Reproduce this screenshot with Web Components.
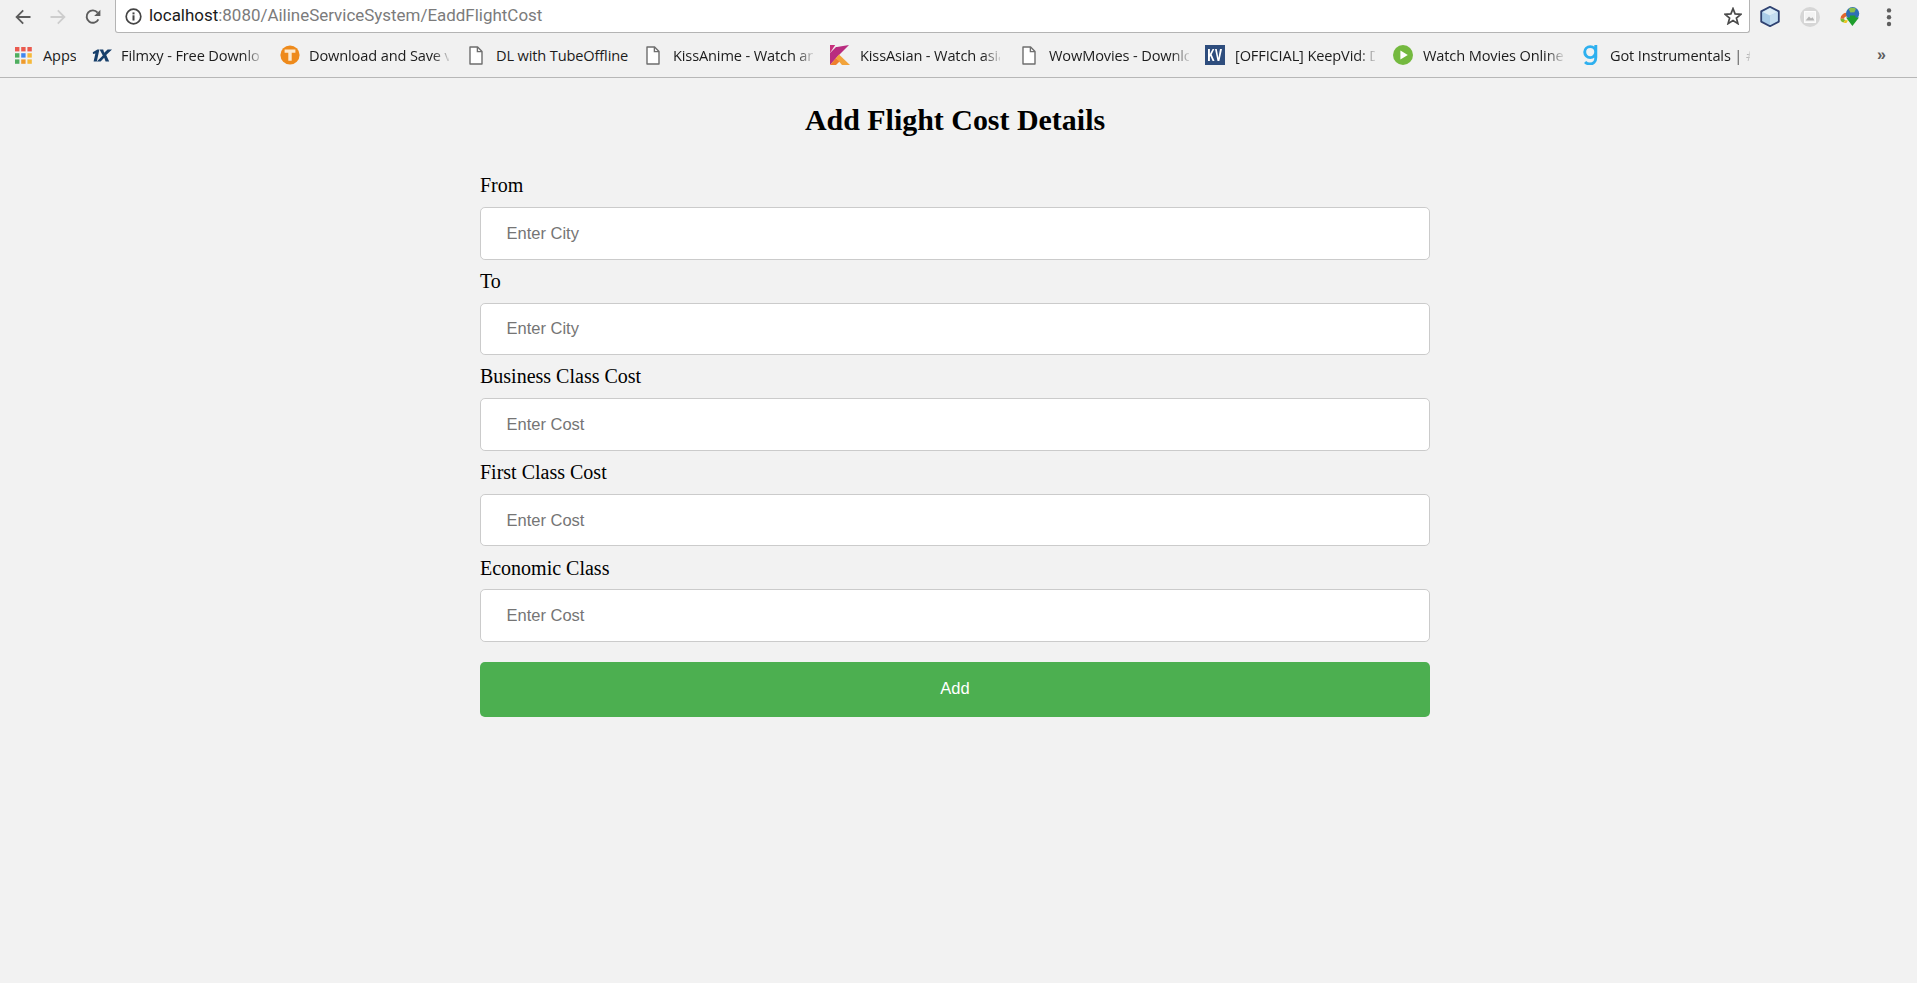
<!DOCTYPE html>
<html lang="en">
<head>
<meta charset="utf-8">
<title>Add Flight Cost Details</title>
<style>
html,body{margin:0;padding:0;height:100%;background:#f2f2f2;overflow:hidden}
body{display:flex;flex-direction:column;height:983px}
</style>
</head>
<body>
<browser-toolbar url-host="localhost" url-path=":8080/AilineServiceSystem/EaddFlightCost"></browser-toolbar>
<bookmarks-bar>
  <bookmark-item icon="apps" w="77" nofade>Apps</bookmark-item>
  <bookmark-item icon="onex" w="188">Filmxy - Free Downlo</bookmark-item>
  <bookmark-item icon="tube" w="189">Download and Save v</bookmark-item>
  <bookmark-item icon="doc" w="177" nofade>DL with TubeOffline</bookmark-item>
  <bookmark-item icon="doc" w="184">KissAnime - Watch an</bookmark-item>
  <bookmark-item icon="kiss" w="192">KissAsian - Watch asia</bookmark-item>
  <bookmark-item icon="doc" w="183">WowMovies - Downlo</bookmark-item>
  <bookmark-item icon="kv" w="188">[OFFICIAL] KeepVid: D</bookmark-item>
  <bookmark-item icon="play" w="190">Watch Movies Online</bookmark-item>
  <bookmark-item icon="got" w="180">Got Instrumentals | #</bookmark-item>
</bookmarks-bar>
<flight-page>
  <form-field label="From" placeholder="Enter City"></form-field>
  <form-field label="To" placeholder="Enter City"></form-field>
  <form-field label="Business Class Cost" placeholder="Enter Cost"></form-field>
  <form-field label="First Class Cost" placeholder="Enter Cost"></form-field>
  <form-field label="Economic Class" placeholder="Enter Cost"></form-field>
  <submit-button>Add</submit-button>
</flight-page>
<script>
const ICONS={
 apps:`<svg width="17" height="17" viewBox="0 0 17 17"><g>
  <rect x="0" y="0" width="4.4" height="4.4" fill="#ea5a4e"/><rect x="6.2" y="0" width="4.4" height="4.4" fill="#ea5a4e"/><rect x="12.4" y="0" width="4.4" height="4.4" fill="#ea5a4e"/>
  <rect x="0" y="6.2" width="4.4" height="4.4" fill="#4fae5f"/><rect x="6.2" y="6.2" width="4.4" height="4.4" fill="#3f86ee"/><rect x="12.4" y="6.2" width="4.4" height="4.4" fill="#f6b93a"/>
  <rect x="0" y="12.4" width="4.4" height="4.4" fill="#4fae5f"/><rect x="6.2" y="12.4" width="4.4" height="4.4" fill="#ee9a2c"/><rect x="12.4" y="12.4" width="4.4" height="4.4" fill="#f6b93a"/></g></svg>`,
 onex:`<svg width="20" height="13" viewBox="0 0 20 13"><path d="M.8 3.2 5.4.6h2L4.8 12.4H1.6L3.4 4.4 1 5z" fill="#173f6b"/><path d="M7.6.6h3.6l1 3.2L15.6.6H20l-5.8 5.4 3 6.4h-3.6l-1.4-3.6-3.6 3.6H4.8l6-5.8z" fill="#173f6b"/></svg>`,
 tube:`<svg width="20" height="20" viewBox="0 0 20 20"><circle cx="10" cy="10" r="9.6" fill="#ee8a1b"/><path d="M4.6 4.6h10.8v3.2h-3.7v8h-3.4v-8H4.6z" fill="#fbe9cf"/></svg>`,
 doc:`<svg width="14" height="19" viewBox="0 0 14 19"><path d="M1 1h7.6L13 5.4V18H1z" fill="#fff" stroke="#6e6e6e" stroke-width="1.4" stroke-linejoin="round"/><path d="M8.4 1v4.6H13" fill="none" stroke="#6e6e6e" stroke-width="1.4"/></svg>`,
 kiss:`<svg width="20" height="20" viewBox="0 0 20 20"><path d="M0 0h5.2L.0 8z" fill="#c8307c"/><path d="M0 20V8L6 2h1l12-2L8 11z" fill="#b92c7f"/><path d="M6 13l3-3.5L20 20h-8z" fill="#f2a33a"/><path d="M0 20l6-7 3.5 3.5L6 20z" fill="#ee7f2d"/></svg>`,
 kv:`<svg width="20" height="20" viewBox="0 0 20 20"><rect width="20" height="20" fill="#2e4d7d"/><path d="M3 4h1.9v5L7.6 4h1.7L6.7 9.6 9.5 16H7.6L5.4 10.9 4.9 11.8V16H3zM10 4h1.8l1.6 9 1.6-9H17l-2.6 12h-1.9z" fill="#fff"/></svg>`,
 play:`<svg width="20" height="20" viewBox="0 0 20 20"><circle cx="10" cy="10" r="10" fill="#74b93f"/><path d="M7.4 5.6 14.8 10l-7.4 4.4z" fill="#fff"/></svg>`,
 got:`<svg width="15" height="20" viewBox="0 0 15 20"><path d="M7.2 1.6a5.5 5.5 0 1 0 0 11 5.5 5.5 0 0 0 0-11zM12.8 0v12.4c0 4.3-2.6 6.6-5.8 6.6-2 0-3.7-.7-4.9-2" fill="none" stroke="#2eb0ef" stroke-width="2.9"/></svg>`
};
const GAPS={apps:11,onex:9,tube:9,doc:13,kiss:10,kv:10,play:10,got:12};

class BrowserToolbar extends HTMLElement{
 constructor(){super();
  const r=this.attachShadow({mode:'open'});
  r.innerHTML=`<style>
  :host{display:flex;flex:0 0 33px;height:33px;background:#f1f1f1;align-items:stretch;box-sizing:border-box}
  .nav{flex:0 0 115px;display:flex;align-items:center;padding-left:15px;gap:19px;box-sizing:border-box}
  .box{flex:0 0 1635px;background:#fff;border:1px solid #b4b4b4;border-top:0;border-radius:0 0 3px 3px;box-sizing:border-box;display:flex;align-items:center;padding:0 7px 0 9px;height:33px}
  .url{font:16.95px/20px "Roboto","Liberation Sans",sans-serif;color:#7b7b7b;margin:0 0 2px 7px;flex:1;white-space:nowrap}
  .url b{font-weight:400;color:#1a1a1a}
  .ext{flex:1;display:flex;align-items:center;padding-left:10px;gap:20px}
  svg{display:block;flex:none}
  </style>
  <div class="nav">
   <svg width="16" height="16" viewBox="0 0 16 16"><path d="M15.5 8H2M8.2 1.4 1.6 8l6.6 6.6" fill="none" stroke="#5c5c5c" stroke-width="1.8"/></svg>
   <svg width="16" height="16" viewBox="0 0 16 16"><path d="M.5 8H14M7.8 1.4 14.4 8l-6.6 6.6" fill="none" stroke="#cdcdcd" stroke-width="1.8"/></svg>
   <svg width="16" height="16" viewBox="0 0 16 16"><path d="M13.4 10.4A6.2 6.2 0 1 1 12.6 3.6" fill="none" stroke="#5c5c5c" stroke-width="1.9"/><path d="M15.4.8v6.2H9.2z" fill="#5c5c5c"/></svg>
  </div>
  <div class="box">
   <svg width="17" height="17" viewBox="0 0 17 17"><circle cx="8.5" cy="8.5" r="7.3" fill="none" stroke="#444" stroke-width="1.7"/><rect x="7.5" y="7.3" width="2" height="5.2" fill="#444"/><rect x="7.5" y="4.4" width="2" height="2" fill="#444"/></svg>
   <span class="url"><b>${this.getAttribute('url-host')}</b>${this.getAttribute('url-path')}</span>
   <svg width="18" height="18" viewBox="0 0 18 18"><path d="M9 1.6 11.1 6.9 16.9 7.3 12.4 11 13.9 16.6 9 13.6 4.1 16.6 5.6 11 1.1 7.3 6.9 6.9z" fill="none" stroke="#4a4a4a" stroke-width="1.7"/></svg>
  </div>
  <div class="ext">
   <svg width="20" height="21" viewBox="0 0 20 21"><path d="M10 .8 18.8 5.4v10.2L10 20.2 1.2 15.6V5.4z" fill="#a9cce8" stroke="#2f4170" stroke-width="1.8" stroke-linejoin="round"/><path d="M2.6 6 10 9.6 17.6 6 10 2.2z" fill="#dcecf6"/><path d="M10 9.6V19l7.6-4V6z" fill="#c5def0"/></svg>
   <svg width="20" height="20" viewBox="0 0 20 20"><circle cx="10" cy="10" r="10" fill="#d6d6d6"/><rect x="4.6" y="4.6" width="10.8" height="10.8" fill="#f3f3f3" stroke="#fff"/><path d="M5.6 13.6 9 9.6l2 2 1.6-1.4 1.8 3.4z" fill="#b5b5b5"/></svg>
   <svg width="21" height="21" viewBox="0 0 21 21"><path d="M.4 12.8a6 6 0 0 1 8-5.6l-1 3.4c-2-.6-3.4.6-3.2 2.2z" fill="#e0662d"/><path d="M.4 12.8c0 2 1.2 3.4 3 3.8l2-2.6c-.8 0-1.6-.5-1.8-1.2z" fill="#7cb82f"/><path d="M3.4 16.6c1 .5 2.2.5 3.2.1l1.4-2.2-2.6-.5z" fill="#f0c419"/><circle cx="12.6" cy="7.6" r="6.6" fill="#2f6fb5"/><path d="M8.6 3c2-1.6 5.4-1.8 7.4-.2l-1.6 3.4-4 .2z" fill="#8cc04a"/><path d="M6 11.6h4V9.4h5.4v2.2h3.6L12.4 20z" fill="#1f9e2d"/></svg>
   <svg style="margin-left:5px" width="6" height="20" viewBox="0 0 6 20"><circle cx="3" cy="3.4" r="2.2" fill="#5e5e5e"/><circle cx="3" cy="10.2" r="2.2" fill="#5e5e5e"/><circle cx="3" cy="17" r="2.2" fill="#5e5e5e"/></svg>
  </div>`;
 }
}
customElements.define('browser-toolbar',BrowserToolbar);

class BookmarksBar extends HTMLElement{
 constructor(){super();
  this.attachShadow({mode:'open'}).innerHTML=`<style>
  :host{display:flex;flex:0 0 45px;height:45px;background:#f1f1f1;border-bottom:1px solid #b7b7b7;box-sizing:border-box;padding-left:15px;align-items:center}
  .more{margin-left:auto;margin-right:31px;color:#5e5e5e;font:bold 16px "Liberation Sans",sans-serif}
  </style><slot></slot><span class="more">»</span>`;
 }
}
customElements.define('bookmarks-bar',BookmarksBar);

class BookmarkItem extends HTMLElement{
 constructor(){super();
  const fade=!this.hasAttribute('nofade');
  const w=+this.getAttribute('w');
  const icon=this.getAttribute('icon');
  this.attachShadow({mode:'open'}).innerHTML=`<style>
  :host{display:flex;flex:0 0 ${w}px;width:${w}px;align-items:center;box-sizing:border-box;height:100%}
  .i{flex:0 0 auto;display:flex;justify-content:center;margin-right:${GAPS[icon]}px}
  svg{display:block}
  .t{font:14.6px "Open Sans","Noto Sans",sans-serif;letter-spacing:-.14px;color:#1c1c1c;white-space:nowrap;overflow:hidden;flex:none;
   ${fade?'width:140px;-webkit-mask-image:linear-gradient(90deg,#000 88%,rgba(0,0,0,.15) 100%);mask-image:linear-gradient(90deg,#000 88%,rgba(0,0,0,.15) 100%);':''}}
  </style><span class="i">${ICONS[icon]}</span><span class="t"><slot></slot></span>`;
 }
}
customElements.define('bookmark-item',BookmarkItem);

class FlightPage extends HTMLElement{
 constructor(){super();
  this.attachShadow({mode:'open'}).innerHTML=`<style>
  :host{display:block;flex:1;background:#f2f2f2;padding:25px 0 0 480px;box-sizing:border-box}
  .wrap{width:950px}
  h2{margin:0 0 37.3px;font:bold 29.95px/34px "Liberation Serif",serif;color:#000;text-align:center}
  </style><div class="wrap"><h2>Add Flight Cost Details</h2><slot></slot></div>`;
 }
}
customElements.define('flight-page',FlightPage);

class FormField extends HTMLElement{
 constructor(){super();
  this.attachShadow({mode:'open'}).innerHTML=`<style>
  :host{display:block;margin-bottom:10.3px}
  label{display:block;font:20px/23.6px "Liberation Serif",serif;color:#000;margin-bottom:9.2px}
  input{display:block;width:100%;box-sizing:border-box;height:52.5px;padding:0 25.5px;background:#fff;border:1.2px solid #cbcbcb;border-radius:4.9px;font:16.5px "Liberation Sans",sans-serif;outline:0}
  input::placeholder{color:#757575;opacity:1}
  </style><label>${this.getAttribute('label')}</label><input type="text" placeholder="${this.getAttribute('placeholder')}">`;
 }
}
customElements.define('form-field',FormField);

class SubmitButton extends HTMLElement{
 constructor(){super();
  this.attachShadow({mode:'open'}).innerHTML=`<style>
  :host{display:block;margin-top:20.2px}
  button{display:block;width:100%;height:55px;background:#4caf50;color:#fff;border:0;border-radius:4.9px;font:16.5px "Liberation Sans",sans-serif;padding:0 0 2px}
  </style><button type="button"><slot></slot></button>`;
 }
}
customElements.define('submit-button',SubmitButton);
</script>
</body>
</html>
